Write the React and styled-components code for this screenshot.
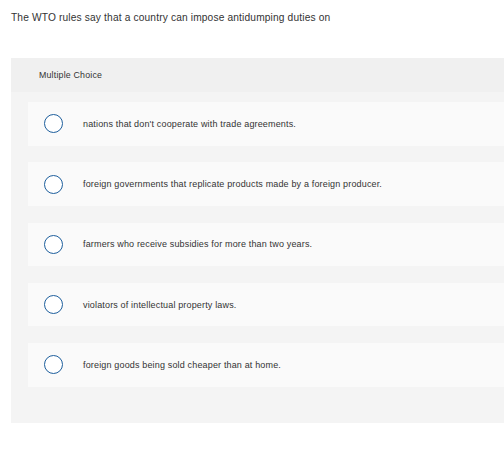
import React from 'react'
import styled, { createGlobalStyle } from 'styled-components'

const GlobalStyle = createGlobalStyle`
  body {
    margin: 0;
    background: #fff;
    font-family: "Liberation Sans", Arial, sans-serif;
    color: #333;
  }
`

const options = [
  "nations that don't cooperate with trade agreements.",
  'foreign governments that replicate products made by a foreign producer.',
  'farmers who receive subsidies for more than two years.',
  'violators of intellectual property laws.',
  'foreign goods being sold cheaper than at home.',
]

const App = () => {
  return (
    <Page>
      <GlobalStyle />
      <Question>The WTO rules say that a country can impose antidumping duties on</Question>
      <Panel>
        <Header>Multiple Choice</Header>
        <Choices>
          {options.map((text) => (
            <Choice key={text}>
              <Radio />
              <Label>{text}</Label>
            </Choice>
          ))}
        </Choices>
      </Panel>
    </Page>
  )
}

const Page = styled.div`
  padding: 11px 0 0 11px;
  width: 504px;
  box-sizing: border-box;
`

const Question = styled.div`
  font-size: 10.2px;
  letter-spacing: 0.15px;
  line-height: 13px;
  color: #333;
`

const Panel = styled.div`
  margin-top: 34px;
`

const Header = styled.div`
  height: 34px;
  background: #f0f0f0;
  display: flex;
  align-items: center;
  padding-left: 28px;
  font-size: 8.8px;
  letter-spacing: 0.2px;
  color: #333;
`

const Choices = styled.div`
  background: #f4f4f4;
  padding: 10px 0 36px 17px;
  display: flex;
  flex-direction: column;
  gap: 16.8px;
`

const Choice = styled.div`
  height: 43.5px;
  background: #fafafa;
  display: flex;
  align-items: center;
  padding-left: 16px;
`

const Radio = styled.span`
  width: 19px;
  height: 19px;
  box-sizing: border-box;
  border: 1.5px solid #1d5e9c;
  border-radius: 50%;
  background: #fff;
  flex-shrink: 0;
`

const Label = styled.span`
  margin-left: 20px;
  font-size: 9px;
  letter-spacing: 0.16px;
  color: #333;
`

export default App
